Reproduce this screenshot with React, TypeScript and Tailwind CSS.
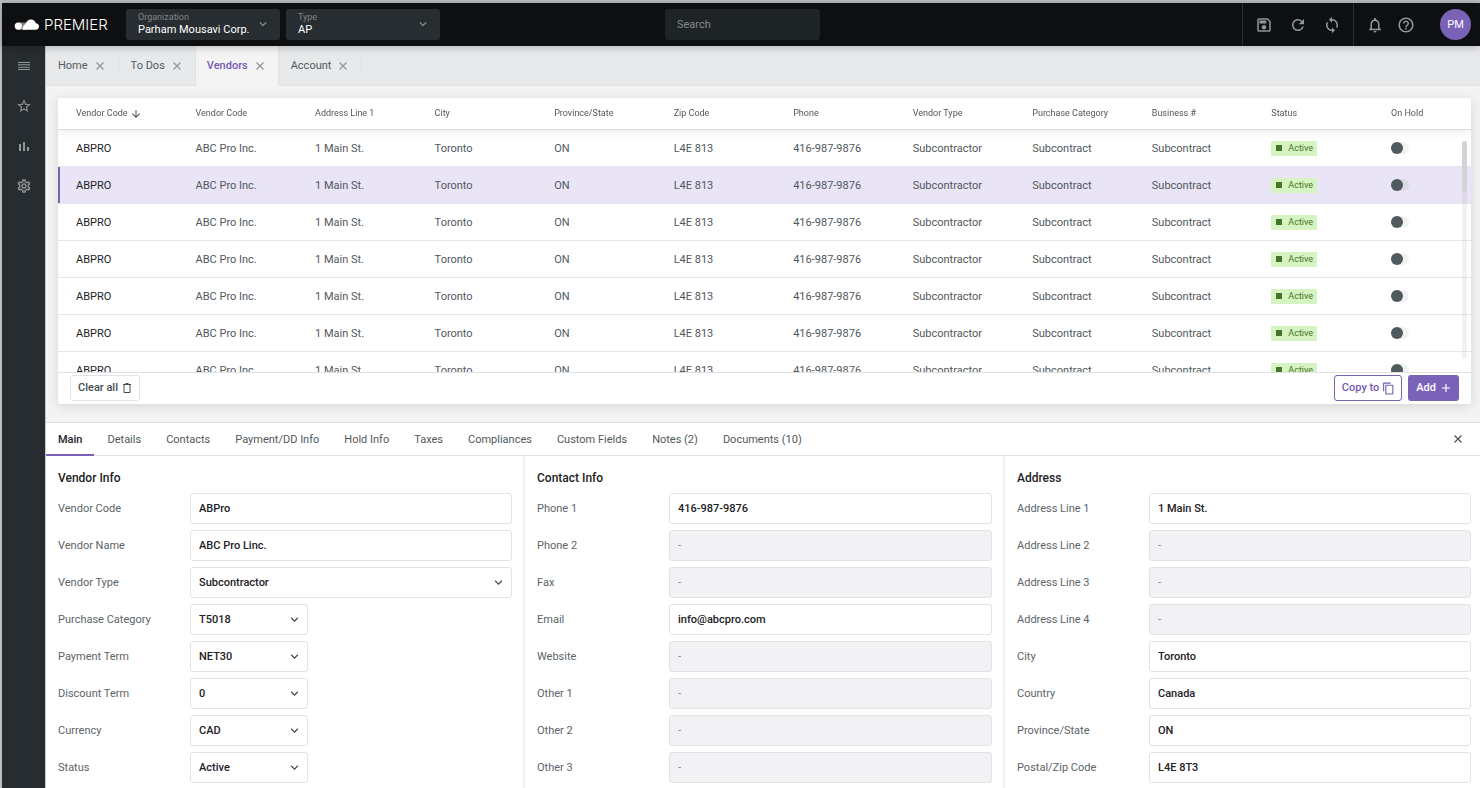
import { ReactNode, useState } from 'react'
import {
  MdAdd,
  MdArrowDownward,
  MdContentCopy,
  MdHelpOutline,
  MdKeyboardArrowDown,
  MdLoop,
  MdOutlineNotifications,
  MdOutlineSave,
  MdOutlineSettings,
  MdRefresh,
  MdStarBorder
} from 'react-icons/md'

type TField = {
  label: string
  value?: string
  select?: 'full' | 'short'
}

const columns = [
  'Vendor Code',
  'Vendor Code',
  'Address Line 1',
  'City',
  'Province/State',
  'Zip Code',
  'Phone',
  'Vendor Type',
  'Purchase Category',
  'Business #'
]

const vendor = [
  'ABC Pro Inc.',
  '1 Main St.',
  'Toronto',
  'ON',
  'L4E 813',
  '416-987-9876',
  'Subcontractor',
  'Subcontract',
  'Subcontract'
]

const rows = [0, 1, 2, 3, 4, 5, 6]

const pageTabs = ['Home', 'To Dos', 'Vendors', 'Account']

const detailTabs = [
  'Main',
  'Details',
  'Contacts',
  'Payment/DD Info',
  'Hold Info',
  'Taxes',
  'Compliances',
  'Custom Fields',
  'Notes (2)',
  'Documents (10)'
]

const vendorInfo: TField[] = [
  { label: 'Vendor Code', value: 'ABPro' },
  { label: 'Vendor Name', value: 'ABC Pro Linc.' },
  { label: 'Vendor Type', value: 'Subcontractor', select: 'full' },
  { label: 'Purchase Category', value: 'T5018', select: 'short' },
  { label: 'Payment Term', value: 'NET30', select: 'short' },
  { label: 'Discount Term', value: '0', select: 'short' },
  { label: 'Currency', value: 'CAD', select: 'short' },
  { label: 'Status', value: 'Active', select: 'short' }
]

const contactInfo: TField[] = [
  { label: 'Phone 1', value: '416-987-9876' },
  { label: 'Phone 2' },
  { label: 'Fax' },
  { label: 'Email', value: 'info@abcpro.com' },
  { label: 'Website' },
  { label: 'Other 1' },
  { label: 'Other 2' },
  { label: 'Other 3' }
]

const address: TField[] = [
  { label: 'Address Line 1', value: '1 Main St.' },
  { label: 'Address Line 2' },
  { label: 'Address Line 3' },
  { label: 'Address Line 4' },
  { label: 'City', value: 'Toronto' },
  { label: 'Country', value: 'Canada' },
  { label: 'Province/State', value: 'ON' },
  { label: 'Postal/Zip Code', value: 'L4E 8T3' }
]

function Logo() {
  return (
    <div className="flex items-center gap-1 pl-[9px] text-white">
      <svg width="26" height="12" viewBox="0 0 26 12" aria-hidden="true">
        <path d="M4.3 3.5H12v7.2H4.3z" fill="#7d8285" />
        <circle cx="4.3" cy="7.1" r="3.6" fill="#fff" />
        <path
          d="M8.4 10.7C8.6 8.2 9.6 6 11.5 5.1 12.3 2.3 14.4.5 16.9.5c2.4 0 4.3 1.5 4.9 3.7 1.9.2 3.2 1.5 3.2 3.2 0 1.9-1.4 3.3-3.3 3.3z"
          fill="#fff"
        />
      </svg>
      <span className="font-[Inter,sans-serif] text-[15px] leading-5 font-light">
        PREMIER
      </span>
    </div>
  )
}

function CloseIcon() {
  return (
    <svg
      width="14"
      height="14"
      viewBox="0 0 14 14"
      fill="none"
      stroke="currentColor"
      strokeWidth="1.1"
    >
      <path d="M3.5 3.5l7 7M10.5 3.5l-7 7" />
    </svg>
  )
}

function HeaderSelect({ label, value }: { label: string; value: string }) {
  return (
    <div className="relative h-[31px] w-[154px] rounded-[3px] bg-[#282d31] pt-[3px]">
      <label
        htmlFor={label}
        className="block pl-3 text-[9px] leading-[10px] text-[#80868a]"
      >
        {label}
      </label>
      <select
        id={label}
        className="block h-[15px] w-full appearance-none pr-6 pl-3 text-[11px] leading-[15px] text-white"
      >
        <option>{value}</option>
      </select>
      <MdKeyboardArrowDown className="pointer-events-none absolute top-2 right-2.5 size-[14px] text-[#92979a]" />
    </div>
  )
}

function IconButton({ label, children }: { label: string; children: ReactNode }) {
  return (
    <button type="button" aria-label={label} className="text-[#92979a]">
      {children}
    </button>
  )
}

function Header() {
  return (
    <header className="relative z-10 flex h-[43px] items-center bg-[#0e0f11] pl-[3px] shadow-[0_1px_8px_rgba(0,0,0,0.25)]">
      <div className="flex flex-1 items-center">
        <div className="w-[121px]">
          <Logo />
        </div>
        <div className="flex gap-1.5">
          <HeaderSelect label="Organization" value="Parham Mousavi Corp." />
          <HeaderSelect label="Type" value="AP" />
        </div>
      </div>
      <input
        type="search"
        aria-label="Search"
        placeholder="Search"
        className="h-[31px] w-[155px] rounded-[3px] bg-[#1e2326] px-3 text-[11px] text-white placeholder:text-[#868b8e]"
      />
      <div className="flex h-full flex-1 items-center justify-end">
        <div className="flex h-full items-center gap-4 border-l border-[#2b2e31] px-3">
          <IconButton label="Save">
            <MdOutlineSave className="size-[18px]" />
          </IconButton>
          <IconButton label="Refresh">
            <MdRefresh className="size-[18px]" />
          </IconButton>
          <IconButton label="Sync">
            <MdLoop className="size-[18px]" />
          </IconButton>
        </div>
        <div className="flex h-full items-center border-l border-[#2b2e31] pr-[9px] pl-3">
          <div className="flex items-center gap-[13px] pr-[25px]">
            <IconButton label="Notifications">
              <MdOutlineNotifications className="size-[18px]" />
            </IconButton>
            <IconButton label="Help">
              <MdHelpOutline className="size-[18px]" />
            </IconButton>
          </div>
          <button
            type="button"
            className="size-[31px] rounded-full bg-[#7a62b8] pt-0.5 text-[11px] text-white"
          >
            PM
          </button>
        </div>
      </div>
    </header>
  )
}

function Sidebar() {
  return (
    <nav className="flex w-11 shrink-0 flex-col items-center gap-6 border-r border-[#c4c6c8] bg-[#272c30] pt-3">
      <IconButton label="Menu">
        <svg width="16" height="16" viewBox="0 0 16 16" fill="currentColor">
          <path d="M2 4h12v1H2zM2 6.300h12v1H2zM2 8.700h12v1H2zM2 11h12v1H2z" />
        </svg>
      </IconButton>
      <IconButton label="Favorites">
        <MdStarBorder className="size-4" />
      </IconButton>
      <IconButton label="Reports">
        <svg width="16" height="16" viewBox="0 0 16 16" fill="currentColor">
          <path d="M3 6h2v7H3zM7 4h2v9H7zM11 9h2v4h-2z" />
        </svg>
      </IconButton>
      <IconButton label="Settings">
        <MdOutlineSettings className="size-4" />
      </IconButton>
    </nav>
  )
}

function PageTabs() {
  return (
    <div className="flex h-10 bg-[#e8e9eb]">
      {pageTabs.map((tab) => (
        <div
          key={tab}
          className={
            tab === 'Vendors'
              ? 'flex items-center gap-[5px] border-x border-[#e0e1e3] bg-[#f4f4f5] pr-[11px] pl-[11px] font-medium text-[#7359b8]'
              : 'flex items-center gap-[5px] border-b border-[#e0e1e3] pl-3 text-[#525a5e]'
          }
        >
          <button type="button" className="text-[11px] leading-4">
            {tab}
          </button>
          <button
            type="button"
            aria-label={`Close ${tab}`}
            className="text-[#8e9396]"
          >
            <CloseIcon />
          </button>
          {tab !== 'Vendors' && (
            <span
              className={
                tab === 'To Dos' ? 'w-1.5' : 'ml-1.5 h-[18px] w-px bg-[#dedfe1]'
              }
            />
          )}
        </div>
      ))}
      <div className="flex-1 border-b border-[#e0e1e3]" />
    </div>
  )
}

function VendorRow({ selected }: { selected: boolean }) {
  const [onHold, setOnHold] = useState(false)

  return (
    <tr
      className={
        selected
          ? 'bg-[#e9e5f6] shadow-[inset_2px_0_0_#7a62b8]'
          : 'bg-white'
      }
    >
      <td className="h-[37px] border-b border-[#e6e6e8] pt-0.5 pl-[18px] text-[#1d2225]">
        ABPRO
      </td>
      {vendor.map((text, index) => (
        <td key={index} className="border-b border-[#e6e6e8] pt-0.5 pl-[18px]">
          {text}
        </td>
      ))}
      <td className="border-b border-[#e6e6e8] pl-[18px]">
        <span className="flex h-[15px] w-[46px] items-center gap-1.5 rounded-[1px] bg-[#d6f3c2] pl-[5px] text-[9px] leading-[15px] text-[#437728]">
          <span className="size-[6px] bg-[#437728]" />
          Active
        </span>
      </td>
      <td className="border-b border-[#e6e6e8] pl-[18px]">
        <label className="flex h-3 w-[18px] items-center rounded-full bg-black/5">
          <input
            type="checkbox"
            aria-label="On Hold"
            checked={onHold}
            onChange={() => setOnHold(!onHold)}
            className="size-3 appearance-none rounded-full bg-[#50595d] checked:ml-auto checked:bg-[#7a62b8]"
          />
        </label>
      </td>
    </tr>
  )
}

function VendorTable() {
  return (
    <section className="rounded-[3px] bg-white shadow-[0_2px_12px_rgba(0,0,0,0.12)]">
      <div className="relative">
        <div className="h-[274px] overflow-y-auto rounded-t-[3px] [scrollbar-width:none]">
          <table className="w-full table-fixed border-separate border-spacing-0 text-left text-[11px] text-[#50585c]">
            <thead className="sticky top-0 z-[1] bg-white text-[9px] shadow-[0_2px_8px_rgba(0,0,0,0.09)]">
              <tr>
                {columns.map((column, index) => (
                  <th
                    key={index}
                    className="h-8 border-b border-[#dcdddf] pl-[18px] font-normal"
                  >
                    <span className="flex items-center gap-0.5">
                      {column}
                      {index === 0 && <MdArrowDownward className="size-3" />}
                    </span>
                  </th>
                ))}
                <th className="border-b border-[#dcdddf] pl-[18px] font-normal">
                  Status
                </th>
                <th className="w-[98px] border-b border-[#dcdddf] pl-[18px] font-normal">
                  On Hold
                </th>
              </tr>
            </thead>
            <tbody>
              {rows.map((row) => (
                <VendorRow key={row} selected={row === 1} />
              ))}
            </tbody>
          </table>
        </div>
        <div className="absolute top-[43px] right-1 z-[2] h-[218px] w-[5px] rounded-full bg-black/5">
          <div className="h-[51px] rounded-full bg-[#d2d3d5]" />
        </div>
      </div>
      <div className="flex items-center gap-1.5 border-t border-[#e0e1e3] pt-0.5 pr-3 pb-[3px] pl-3 text-[11px] font-medium">
        <button
          type="button"
          className="mr-auto flex h-[26px] items-center gap-[3px] rounded-[3px] border border-[#e2e3e5] pr-1.5 pl-[7px] text-[#454d51]"
        >
          Clear all
          <svg
            width="12"
            height="12"
            viewBox="0 0 12 12"
            fill="none"
            stroke="currentColor"
          >
            <path d="M2 2.5h8M4.5 1.5h3M3 3v7.500h6V3" />
          </svg>
        </button>
        <button
          type="button"
          className="flex h-[26px] items-center gap-[3px] rounded-[3px] border border-[#7a62b8] pr-1.5 pl-[7px] text-[#7359b8]"
        >
          Copy to
          <MdContentCopy className="size-[13px]" />
        </button>
        <button
          type="button"
          className="flex h-[26px] items-center gap-[3px] rounded-[3px] bg-[#7a62b8] pr-1.5 pl-2 text-white"
        >
          Add
          <MdAdd className="size-[14px]" />
        </button>
      </div>
    </section>
  )
}

function Field({ id, label, value, select }: TField & { id: string }) {
  return (
    <div className="flex items-center">
      <label htmlFor={id} className="w-[132px] shrink-0 pt-0.5 text-[#5b6468]">
        {label}
      </label>
      {select ? (
        <div
          className={select === 'full' ? 'relative flex-1' : 'relative w-[118px]'}
        >
          <select
            id={id}
            className="block h-[31px] w-full appearance-none rounded-[3px] border border-[#e2e3e5] bg-white pt-0.5 pr-6 pl-2 font-medium text-[#1d2225]"
          >
            <option>{value}</option>
          </select>
          <MdKeyboardArrowDown className="pointer-events-none absolute top-2 right-1.5 size-[15px] text-[#454d51]" />
        </div>
      ) : (
        <input
          id={id}
          type="text"
          defaultValue={value}
          placeholder="-"
          disabled={!value}
          className="h-[31px] min-w-0 flex-1 rounded-[3px] border border-[#e2e3e5] bg-white px-2 font-medium text-[#1d2225] placeholder:font-normal placeholder:text-[#80868a] disabled:bg-[#f2f2f4]"
        />
      )}
    </div>
  )
}

function FieldGroup({ title, fields }: { title: string; fields: TField[] }) {
  return (
    <>
      <h2 className="pb-[7px] text-xs leading-4 font-medium text-[#1d2225]">
        {title}
      </h2>
      <div className="flex flex-col gap-1.5 text-[11px]">
        {fields.map((field) => (
          <Field
            key={field.label}
            id={`${title} ${field.label}`}
            {...field}
          />
        ))}
      </div>
    </>
  )
}

function VendorDetails() {
  return (
    <section className="flex flex-1 flex-col border-t border-[#dcdddf] bg-white">
      <div className="flex h-[33px] border-b border-[#e2e3e5] pr-[15px]">
        {detailTabs.map((tab, index) => (
          <button
            key={tab}
            type="button"
            className={
              index === 0
                ? '-mb-px border-b-2 border-[#7a62b8] px-3 pt-[3px] text-[11px] font-medium text-[#1d2225]'
                : 'pt-0.5 pr-3 pl-[13px] text-[11px] text-[#50585c]'
            }
          >
            {tab}
          </button>
        ))}
        <button
          type="button"
          aria-label="Close details"
          className="ml-auto text-[#454d51]"
        >
          <CloseIcon />
        </button>
      </div>
      <div className="grid flex-1 grid-cols-[479fr_480fr_475fr]">
        <div className="border-r-2 border-[#f0f0f2] pt-[14px] pr-[11px] pb-[5px] pl-3">
          <FieldGroup title="Vendor Info" fields={vendorInfo} />
        </div>
        <div className="border-r-2 border-[#f0f0f2] pt-[14px] pr-[11px] pb-[5px] pl-3">
          <FieldGroup title="Contact Info" fields={contactInfo} />
        </div>
        <div className="pt-[14px] pr-[9px] pb-[5px] pl-3">
          <FieldGroup title="Address" fields={address} />
        </div>
      </div>
    </section>
  )
}

export default function App() {
  return (
    <div className="flex min-h-screen flex-col border-t-3 border-l-2 border-[#bcbec0] bg-[#f3f3f4] font-[Roboto,sans-serif]">
      <Header />
      <div className="flex flex-1">
        <Sidebar />
        <main className="flex min-w-0 flex-1 flex-col">
          <PageTabs />
          <div className="pt-3 pr-[9px] pb-[18px] pl-3">
            <VendorTable />
          </div>
          <VendorDetails />
        </main>
      </div>
    </div>
  )
}
